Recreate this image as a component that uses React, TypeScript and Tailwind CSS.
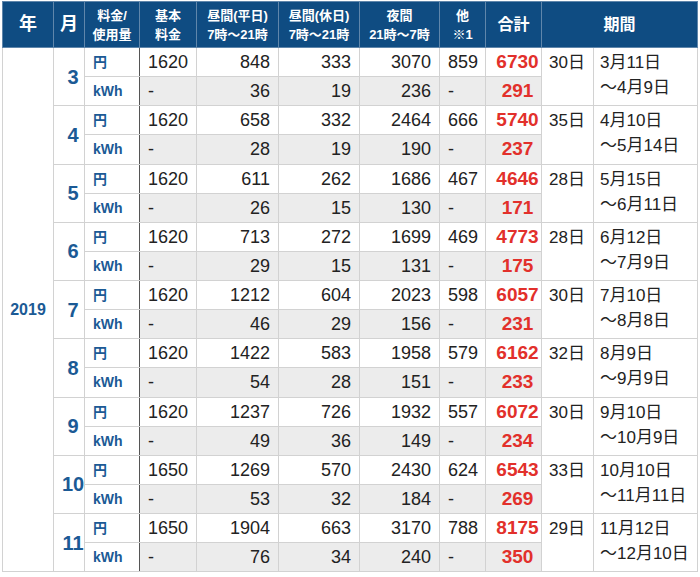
import React from "react";

type Month = {
  m: number;
  yen: [number, number, number, number, number, number];
  kwh: [number, number, number, number];
  days: string;
  from: string;
  to: string;
};

const months: Month[] = [
  { m: 3, yen: [1620, 848, 333, 3070, 859, 6730], kwh: [36, 19, 236, 291], days: "30日", from: "3月11日", to: "〜4月9日" },
  { m: 4, yen: [1620, 658, 332, 2464, 666, 5740], kwh: [28, 19, 190, 237], days: "35日", from: "4月10日", to: "〜5月14日" },
  { m: 5, yen: [1620, 611, 262, 1686, 467, 4646], kwh: [26, 15, 130, 171], days: "28日", from: "5月15日", to: "〜6月11日" },
  { m: 6, yen: [1620, 713, 272, 1699, 469, 4773], kwh: [29, 15, 131, 175], days: "28日", from: "6月12日", to: "〜7月9日" },
  { m: 7, yen: [1620, 1212, 604, 2023, 598, 6057], kwh: [46, 29, 156, 231], days: "30日", from: "7月10日", to: "〜8月8日" },
  { m: 8, yen: [1620, 1422, 583, 1958, 579, 6162], kwh: [54, 28, 151, 233], days: "32日", from: "8月9日", to: "〜9月9日" },
  { m: 9, yen: [1620, 1237, 726, 1932, 557, 6072], kwh: [49, 36, 149, 234], days: "30日", from: "9月10日", to: "〜10月9日" },
  { m: 10, yen: [1650, 1269, 570, 2430, 624, 6543], kwh: [53, 32, 184, 269], days: "33日", from: "10月10日", to: "〜11月11日" },
  { m: 11, yen: [1650, 1904, 663, 3170, 788, 8175], kwh: [76, 34, 240, 350], days: "29日", from: "11月12日", to: "〜12月10日" },
];

const cell = "border border-[#d2d2d2] p-0 align-middle leading-[26px]";
const num = "text-[18px] text-[#222]";
const total = "text-[19px] font-bold text-[#e2302b] text-center pl-2";
const label = "text-[14px] font-bold text-[#1b5a95] text-left pl-2";
const th = "border border-[#5f86ab] bg-[#0f4c82] text-white font-bold p-0 align-middle text-center";

export default function App() {
  return (
    <div
      className="w-[700px] h-[577px] bg-white pt-px pl-[2px]"
      style={{ fontFamily: '"Liberation Sans", "Noto Sans CJK JP", sans-serif' }}
    >
      <table className="table-fixed border-collapse w-[695px]">
        <colgroup>
          <col className="w-[51px]" />
          <col className="w-[31px]" />
          <col className="w-[55px]" />
          <col className="w-[57px]" />
          <col className="w-[82px]" />
          <col className="w-[81px]" />
          <col className="w-[80px]" />
          <col className="w-[46px]" />
          <col className="w-[56px]" />
          <col className="w-[52px]" />
          <col className="w-[104px]" />
        </colgroup>
        <thead>
          <tr className="h-[46px]">
            <th className={`${th} text-[18px]`}>年</th>
            <th className={`${th} text-[18px]`}>月</th>
            <th className={`${th} text-[13px] leading-[19px]`}>料金/<br />使用量</th>
            <th className={`${th} text-[13px] leading-[19px]`}>基本<br />料金</th>
            <th className={`${th} text-[13px] leading-[19px]`}>昼間(平日)<br />7時〜21時</th>
            <th className={`${th} text-[13px] leading-[19px]`}>昼間(休日)<br />7時〜21時</th>
            <th className={`${th} text-[13px] leading-[19px]`}>夜間<br />21時〜7時</th>
            <th className={`${th} text-[13px] leading-[19px]`}>他<br /><span className="font-normal">※</span>1</th>
            <th className={`${th} text-[16px]`}>合計</th>
            <th className={`${th} text-[16px]`} colSpan={2}>期間</th>
          </tr>
        </thead>
        <tbody>
          {months.map((mo, i) => (
            <React.Fragment key={mo.m}>
              <tr className="h-[29px]">
                {i === 0 && (
                  <td className={`${cell} text-center text-[16px] font-bold text-[#1b5a95]`} rowSpan={18}>
                    2019
                  </td>
                )}
                <td className={`${cell} text-center pl-2 text-[20px] font-bold text-[#1b5a95] whitespace-nowrap`} rowSpan={2}>
                  {mo.m}
                </td>
                <td className={`${cell} ${label} border-r-[#555]`}>円</td>
                <td className={`${cell} ${num} text-left pl-2 border-l-[#555]`}>{mo.yen[0]}</td>
                <td className={`${cell} ${num} text-right pr-2`}>{mo.yen[1]}</td>
                <td className={`${cell} ${num} text-right pr-2`}>{mo.yen[2]}</td>
                <td className={`${cell} ${num} text-right pr-2`}>{mo.yen[3]}</td>
                <td className={`${cell} ${num} text-left pl-2`}>{mo.yen[4]}</td>
                <td className={`${cell} ${total}`}>{mo.yen[5]}</td>
                <td className={`${cell} align-top text-[17px] text-[#222] pl-[7px] pt-[2px]`} rowSpan={2}>
                  {mo.days}
                </td>
                <td className={`${cell} align-top text-[17px] text-[#222] pl-[6px] !leading-[25px] pt-[2px] whitespace-nowrap`} rowSpan={2}>
                  {mo.from}
                  <br />
                  {mo.to}
                </td>
              </tr>
              <tr className="h-[29.25px]">
                <td className={`${cell} ${label} border-r-[#555]`}>kWh</td>
                <td className={`${cell} ${num} text-left pl-2 bg-[#ececec] border-l-[#555]`}>-</td>
                <td className={`${cell} ${num} text-right pr-2 bg-[#ececec]`}>{mo.kwh[0]}</td>
                <td className={`${cell} ${num} text-right pr-2 bg-[#ececec]`}>{mo.kwh[1]}</td>
                <td className={`${cell} ${num} text-right pr-2 bg-[#ececec]`}>{mo.kwh[2]}</td>
                <td className={`${cell} ${num} text-left pl-2 bg-[#ececec]`}>-</td>
                <td className={`${cell} ${total} bg-[#ececec]`}>{mo.kwh[3]}</td>
              </tr>
            </React.Fragment>
          ))}
        </tbody>
      </table>
    </div>
  );
}
